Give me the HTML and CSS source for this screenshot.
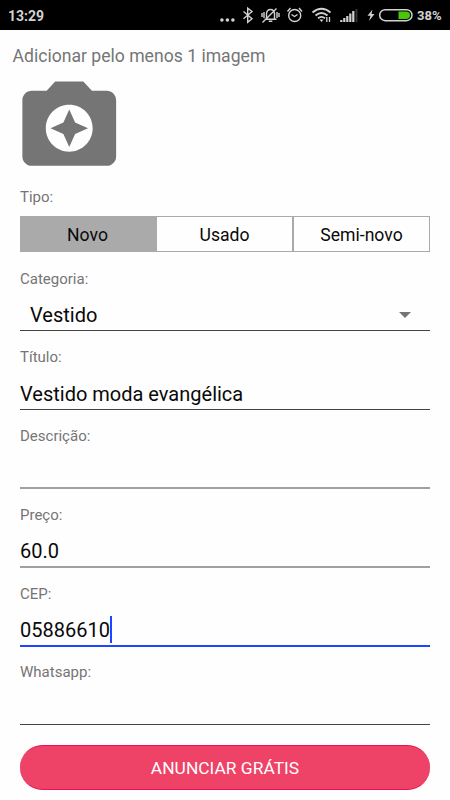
FILE: index.html
```html
<!DOCTYPE html>
<html lang="pt-BR">
<head>
<meta charset="utf-8">
<title>Anunciar</title>
<link rel="stylesheet" href="styles.css">
</head>
<body>
<header class="status">
  <span class="time">13:29</span>
  <svg class="status-icons" width="196" height="30" viewBox="0 0 196 30" fill="none" stroke="#d2d2d2" stroke-width="1.4">
    <g fill="#d2d2d2" stroke="none"><circle cx="1.900" cy="20" r="1.800"/><circle cx="7.400" cy="20" r="1.800"/><circle cx="12.900" cy="20" r="1.800"/></g>
    <path d="M23.500 11.500l8.500 7.300-4.300 3.500V8.200l4.300 3.300-8.500 7.300"/>
    <path d="M44.500 19.300h12M46.500 18.500v-5q.5-4 4-4t4 4v5M48.800 21.300h3.500M42.500 22.500L56.500 8.500M44 12v6M42 13v4M57 12v6M59 13v4"/>
    <circle cx="74.700" cy="15.500" r="6"/><path d="M71.500 14.500l3 2 3-2M67.500 11.500l3-3.500M82 11.500L79 8"/>
    <g stroke-width="1.900"><path d="M92.500 12.500q9-7.500 18 0M95.500 15.500q6-5 12 0M98 18.200q3.500-2.600 7 0"/></g>
    <path d="M99.500 19.500h4l-2 2.500z" fill="#d2d2d2" stroke="none"/>
    <path d="M106.800 22v-5M109.500 17v5" stroke-width="1.300"/>
    <path d="M121.300 22v-2M124.300 22v-4M127.300 22v-6M130.300 22v-8.500M133.300 22V11" stroke-width="2.200"/>
    <path d="M136.500 22V9" stroke="#333" stroke-width="2"/>
    <path d="M152.500 9.500l-5 6.200h3l-1.500 5.300 5.500-7h-3z" fill="#d2d2d2" stroke="none"/>
    <rect x="159.700" y="9.700" width="32.300" height="11" rx="5.500" stroke-width="1.500"/>
    <path d="M178.500 11.500h7.500q4 0 4 3.700t-4 3.700H178.500z" fill="#49c50a" stroke="none"/>
  </svg>
  <span class="percent">38%</span>
</header>
<main>
  <h1 class="heading">Adicionar pelo menos 1 imagem</h1>
  <svg class="camera" viewBox="0 0 24 24" fill="#757575"><path d="M9 2L7.170 4H4c-1.100 0-2 .9-2 2v12c0 1.100.9 2 2 2h16c1.100 0 2-.9 2-2V6c0-1.100-.9-2-2-2h-3.170L15 2H9zm3 15c-2.760 0-5-2.240-5-5s2.240-5 5-5 5 2.240 5 5-2.240 5-5 5z"/><path d="M12 16l1.250-2.750L16 12l-2.750-1.250L12 8l-1.250 2.750L8 12l2.750 1.250z"/></svg>
  <form class="form">
    <div class="label type-label">Tipo:</div>
    <div class="segments">
      <div class="segment selected">Novo</div>
      <div class="segment">Usado</div>
      <div class="segment">Semi-novo</div>
    </div>
    <div class="field">
      <div class="label">Categoria:</div>
      <div class="value select">Vestido<svg class="arrow" width="12" height="6" viewBox="0 0 12 6"><path d="M0 0h12L6 6z" fill="#757575"/></svg></div>
    </div>
    <div class="field"><div class="label">Título:</div><div class="value title">Vestido moda evangélica</div></div>
    <div class="field soft"><div class="label">Descrição:</div><div class="value"></div></div>
    <div class="field soft"><div class="label">Preço:</div><div class="value">60.0</div></div>
    <div class="field focused"><div class="label">CEP:</div><div class="value">05886610<span class="caret"></span></div></div>
    <div class="field"><div class="label">Whatsapp:</div><div class="value"></div></div>
    <div class="submit">ANUNCIAR GRÁTIS</div>
  </form>
</main>
</body>
</html>
```

FILE: styles.css
```css
* { box-sizing: border-box; }
body {
  margin: 0;
  height: 800px;
  overflow: hidden;
  background: #fefefe;
  font-family: Roboto, sans-serif;
  color: #090909;
}
.status {
  display: flex;
  height: 30px;
  align-items: center;
  padding: 0 8px;
  background: #000;
  color: #d2d2d2;
  font-size: 14px;
  font-weight: 700;
}
.time { flex: 1; line-height: 30px; padding-top: 1px; }
.percent { width: 25px; margin-left: 1px; font-size: 13px; padding-top: 1px; }
.status-icons { flex: none; }
.heading {
  margin: 0;
  padding: 14px 0 0 12.5px;
  height: 42px;
  font-size: 17.6px;
  font-weight: 400;
  line-height: 24px;
  color: #757575;
}
.camera { display: block; width: 112.5px; height: 112.5px; margin-left: 12.6px; }
.form { padding: 0 20px; }
.label { font-size: 15px; line-height: 20px; color: #757575; }
.type-label { padding-top: 2.5px; height: 31.5px; }
.segments {
  display: grid;
  grid-template-columns: 136px 135px 1fr;
  height: 36px;
  border: 1px solid #aaa;
}
.segment {
  height: 34px;
  font-size: 17.6px;
  line-height: 36px;
  text-align: center;
}
.segment + .segment + .segment { border-left: 2px solid #aaa; }
.selected { background: #aaa; padding-right: 3px; }
.field {
  display: flex;
  flex-direction: column;
  height: 78.75px;
  padding-top: 16.5px;
  border-bottom: 1px solid #444;
}
.soft,
.focused {
  height: 79.75px;
  margin-bottom: -1px;
}
.soft { border-bottom: 2px solid #a0a0a0; }
.focused { border-bottom: 2px solid #1e46ff; }
.value {
  display: flex;
  align-items: center;
  height: 32px;
  margin-top: 11px;
  font-size: 20px;
}
.title { margin-top: 11.5px; }
.select { justify-content: space-between; padding: 0 19px 0 10px; }
.caret { width: 2px; height: 27px; background: #1e46ff; }
.submit {
  height: 45px;
  margin-top: 20px;
  border-radius: 23px;
  border-top: 1px solid #e91153;
  border-bottom: 1px solid #e91153;
  background: #ef4267;
  color: #fff;
  font-size: 17.4px;
  line-height: 44px;
  text-align: center;
}
```
